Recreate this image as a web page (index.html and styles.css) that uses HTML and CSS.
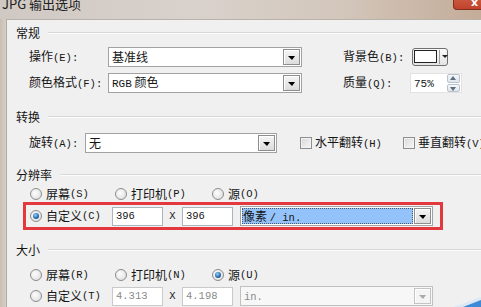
FILE: index.html
```html
<!DOCTYPE html>
<html lang="zh-CN">
<head>
    <meta charset="UTF-8">
    <title>JPG 输出选项</title>
    <link rel="stylesheet" href="styles.css">
</head>
<body>

<div class="window">
    <div class="titlebar">
        <span class="title">JPG 输出选项</span>
        <span class="close">x</span>
    </div>

    <div class="frame">
        <div class="edge"></div>
        <div class="panel">

            <!-- 常规 -->
            <div class="group-title g1">常规</div>
            <div class="row r1">
                <span class="lbl w79">操作<span class="m">(E):</span></span>
                <div class="combo w194"><span class="txt">基准线</span><i class="drop"></i></div>
                <span class="lbl w69 ml41">背景色<span class="m">(B):</span></span>
                <div class="swatch"><i class="chip"></i><i class="mini-drop"></i></div>
            </div>
            <div class="row r2">
                <span class="lbl w79">颜色格式<span class="m">(F):</span></span>
                <div class="combo w194"><span class="txt"><span class="m big">RGB</span> 颜色</span><i class="drop"></i></div>
                <span class="lbl w67 ml41">质量<span class="m">(Q):</span></span>
                <div class="spin">
                    <span class="txt"><span class="m big">75%</span></span>
                    <span class="spin-btns"><i class="up"></i><i class="down"></i></span>
                </div>
            </div>

            <!-- 转换 -->
            <div class="group-title g2">转换</div>
            <div class="row r3">
                <span class="lbl w56">旋转<span class="m">(A):</span></span>
                <div class="combo w192"><span class="txt">无</span><i class="drop"></i></div>
                <span class="check ml23"></span>
                <span class="opt-text">水平翻转<span class="m">(H)</span></span>
                <span class="check ml21"></span>
                <span class="opt-text">垂直翻转<span class="m">(V)</span></span>
            </div>

            <!-- 分辨率 -->
            <div class="group-title g3">分辨率</div>
            <div class="row radios r4">
                <span class="item w85"><i class="radio"></i>屏幕<span class="m">(S)</span></span>
                <span class="item w97"><i class="radio"></i>打印机<span class="m">(P)</span></span>
                <span class="item"><i class="radio"></i>源<span class="m">(O)</span></span>
            </div>
            <div class="marked">
                <span class="item w82"><i class="radio on"></i>自定义<span class="m">(C)</span></span>
                <div class="num"><span class="m">396</span></div>
                <span class="times m">X</span>
                <div class="num"><span class="m">396</span></div>
                <div class="combo unit">
                    <span class="hl">像素 <span class="m">/ in.</span></span><i class="drop"></i>
                </div>
            </div>

            <!-- 大小 -->
            <div class="group-title g4">大小</div>
            <div class="row radios r5">
                <span class="item w85"><i class="radio"></i>屏幕<span class="m">(R)</span></span>
                <span class="item w97"><i class="radio"></i>打印机<span class="m">(N)</span></span>
                <span class="item"><i class="radio on"></i>源<span class="m">(U)</span></span>
            </div>
            <div class="row radios r6">
                <span class="item w82"><i class="radio"></i>自定义<span class="m">(T)</span></span>
                <div class="num off"><span class="m">4.313</span></div>
                <span class="times m">X</span>
                <div class="num off"><span class="m">4.198</span></div>
                <div class="combo unit off"><span class="txt"><span class="m">in.</span></span><i class="drop"></i></div>
            </div>

        </div>
    </div>

    <!-- desktop peeking through at the corner -->
    <svg class="corner" width="32" height="10" viewBox="0 0 32 10">
        <polygon points="32,0 32,10 4,10" fill="#dce9f5"/>
        <polygon points="32,3 32,10 14,10" fill="#3d8ad6"/>
    </svg>
</div>

</body>
</html>
```

FILE: styles.css
```css
* {box-sizing: border-box;}

body {
    margin: 0;
    width: 481px;
    height: 307px;
    overflow: hidden;
    background: #f0f0f0;
    font: 12px "Noto Sans CJK SC", sans-serif;
    color: #151515;
}

/* SimSun-like half width latin */
.m {
    font-family: "Liberation Mono", monospace;
    font-size: 10.5px;
}

.m.big {
    font-size: 11px;
}

.window {
    position: relative;
    width: 481px;
    height: 307px;
    display: flex;
    flex-direction: column;
}

/* Title bar */
.titlebar {
    height: 19px;
    flex: none;
    display: flex;
    align-items: flex-start;
    overflow: hidden;
    background: linear-gradient(to right, #d0c9c3, #d9d2cc 40%, #d3c7bc 70%, #c4ac98);
}

.title {
    font: 13px "Noto Sans CJK SC", sans-serif;
    line-height: 13px;
    margin-top: -3px;
    padding-left: 2px;
    color: #202020;
}

.close {
    margin-left: auto;
    width: 28px;
    height: 10px;
    border: 1px solid #80301f;
    border-top: none;
    border-right: none;
    border-radius: 0 0 0 4px;
    background: linear-gradient(#c9573d, #c2412a);
    color: #fff;
    font: bold 11px "DejaVu Sans", sans-serif;
    line-height: 6px;
    text-align: right;
    padding-right: 3px;
}

/* Frame and main panel */
.frame {
    flex: 1;
    display: flex;
    background: #cfc6bd;
}

.edge {
    width: 6px;
    flex: none;
    background: linear-gradient(to right, #c9bfb5, #d6cdc5);
}

.panel {
    flex: 1;
    display: flex;
    flex-direction: column;
    border-top: 1px solid #b9b2ab;
    border-left: 1px solid #b1aaa4;
    background: #f0f0f0;
}

/* Group headings with etched line */
.group-title {
    height: 14px;
    line-height: 14px;
    display: flex;
    align-items: center;
    gap: 8px;
    margin-left: 9px;
}

.group-title::after {
    content: "";
    flex: 1;
    border-top: 1px solid #d6d9dc;
    border-bottom: 1px solid #fcfcfc;
}

.g1 {margin-top: 6px;}
.g2 {margin-top: 17px;}
.g3 {margin-top: 15px;}
.g4 {margin-top: 13px;}

.row {
    display: flex;
    align-items: center;
    padding-left: 22px;
    height: 20px;
}

.r1 {margin-top: 7px;}
.r2 {margin-top: 6px;}
.r3 {margin-top: 9px;}
.r4 {margin-top: 6px; height: 12px;}
.r5 {margin-top: 11px; height: 14px;}
.r6 {margin-top: 4px;}

.radios {padding-left: 23px;}

.lbl {flex: none; line-height: 14px;}

.w56 {width: 56px;}
.w67 {width: 67px;}
.w69 {width: 69px;}
.w79 {width: 79px;}
.w82 {width: 82px;}
.w85 {width: 85px;}
.w97 {width: 97px;}
.ml21 {margin-left: 21px;}
.ml23 {margin-left: 23px;}
.ml41 {margin-left: 41px;}

/* Combo boxes */
.combo {
    flex: none;
    height: 20px;
    display: flex;
    align-items: center;
    border: 1px solid #a2a2a2;
    background: #fff;
    padding-left: 3px;
}

.w192 {width: 192px;}
.w194 {width: 194px;}

.combo .txt {flex: 1; line-height: 14px;}

.drop {
    position: relative;
    width: 17px;
    height: 16px;
    margin-right: 1px;
    border: 1px solid #8e8e8e;
    background: linear-gradient(#f5f5f5, #dcdcdc);
    box-shadow: inset 1px 1px 0 #fff;
}

.drop::after {
    content: "";
    position: absolute;
    left: 4px;
    top: 6px;
    border-left: 4px solid transparent;
    border-right: 3px solid transparent;
    border-top: 4px solid #000;
}

/* Background colour button */
.swatch {
    width: 36px;
    height: 18px;
    margin-top: -1px;
    display: flex;
    align-items: center;
    padding: 0 2px 0 1px;
    border: 1px solid #6f6f6f;
    border-radius: 3px;
    background: linear-gradient(#fafafa, #e4e4e4);
}

.chip {
    width: 23px;
    height: 13px;
    border: 1px solid #222;
    background: #fff;
}

.mini-drop {
    position: relative;
    flex: 1;
    height: 14px;
    margin-left: 2px;
    border-left: 1px solid #a0a0a0;
}

.mini-drop::after {
    content: "";
    position: absolute;
    left: 2px;
    top: 5px;
    border-left: 3px solid transparent;
    border-right: 3px solid transparent;
    border-top: 3px solid #222;
}

/* Quality spinner */
.spin {
    width: 52px;
    height: 20px;
    display: flex;
    align-items: center;
    padding-left: 3px;
    background: #fff;
    border: 1px solid #e2e2e2;
}

.spin .txt {flex: 1; line-height: 14px;}

.spin-btns {
    width: 13px;
    height: 18px;
    margin-right: 1px;
    display: flex;
    flex-direction: column;
    gap: 1px;
}

.spin-btns i {
    position: relative;
    flex: 1;
    border: 1px solid #b9c3cd;
    border-radius: 2px;
    background: linear-gradient(#f6f8fa, #dfe5ea);
}

.spin-btns i::after {
    content: "";
    position: absolute;
    left: 2px;
    border-left: 3px solid transparent;
    border-right: 3px solid transparent;
}

.spin-btns .up::after {top: 1px; border-bottom: 4px solid #5b6d7e;}
.spin-btns .down::after {top: 2px; border-top: 4px solid #5b6d7e;}

/* Checkboxes */
.check {
    flex: none;
    width: 12px;
    height: 12px;
    border: 1px solid #8f8f8f;
    background: linear-gradient(135deg, #d8d8d8, #f7f7f7);
    box-shadow: inset 0 0 0 1px #f2f2f2;
}

.opt-text {
    margin-left: 3px;
    line-height: 14px;
    white-space: nowrap;
}

/* Radio items */
.item {
    display: flex;
    align-items: center;
    flex: none;
    line-height: 14px;
    white-space: nowrap;
}

.radio {
    position: relative;
    width: 12px;
    height: 12px;
    margin-right: 4px;
    border: 1px solid #8c8c8c;
    border-radius: 50%;
    background: radial-gradient(circle at 40% 40%, #fdfdfd, #d9d9d9);
}

.radio.on::after {
    content: "";
    position: absolute;
    left: 2px;
    top: 2px;
    width: 6px;
    height: 6px;
    border-radius: 50%;
    background: radial-gradient(circle at 40% 35%, #8fd3ff, #2366a8 60%, #173a5e);
}

/* Highlighted resolution row */
.marked {
    display: flex;
    align-items: center;
    margin-top: 2px;
    margin-left: 16px;
    width: 420px;
    height: 28px;
    padding-left: 4px;
    border: 3px solid #e3393e;
}

.num {
    flex: none;
    width: 51px;
    height: 19px;
    display: flex;
    align-items: center;
    padding-left: 3px;
    border: 1px solid #aab4bf;
    background: #fff;
}

.num.off {
    border-color: #c9c9c9;
    color: #8a8a8a;
}

.times {
    width: 19px;
    text-align: center;
}

.unit {
    width: 193px;
    margin-left: 7px;
    padding-left: 1px;
}

.hl {
    flex: 1;
    height: 16px;
    line-height: 15px;
    margin-right: 1px;
    padding-left: 1px;
    background: #94c3fb;
    outline: 1px dotted #4a5a6a;
    outline-offset: -1px;
}

.unit.off {
    padding-left: 3px;
    border-color: #c0c0c0;
    background: #f7f7f7;
    color: #8a8a8a;
}

.unit.off .drop {
    border-color: #c4c4c4;
    background: #f4f4f4;
}

.unit.off .drop::after {border-top-color: #a9a9a9;}

.corner {
    position: absolute;
    right: 0;
    bottom: 0;
}
```
